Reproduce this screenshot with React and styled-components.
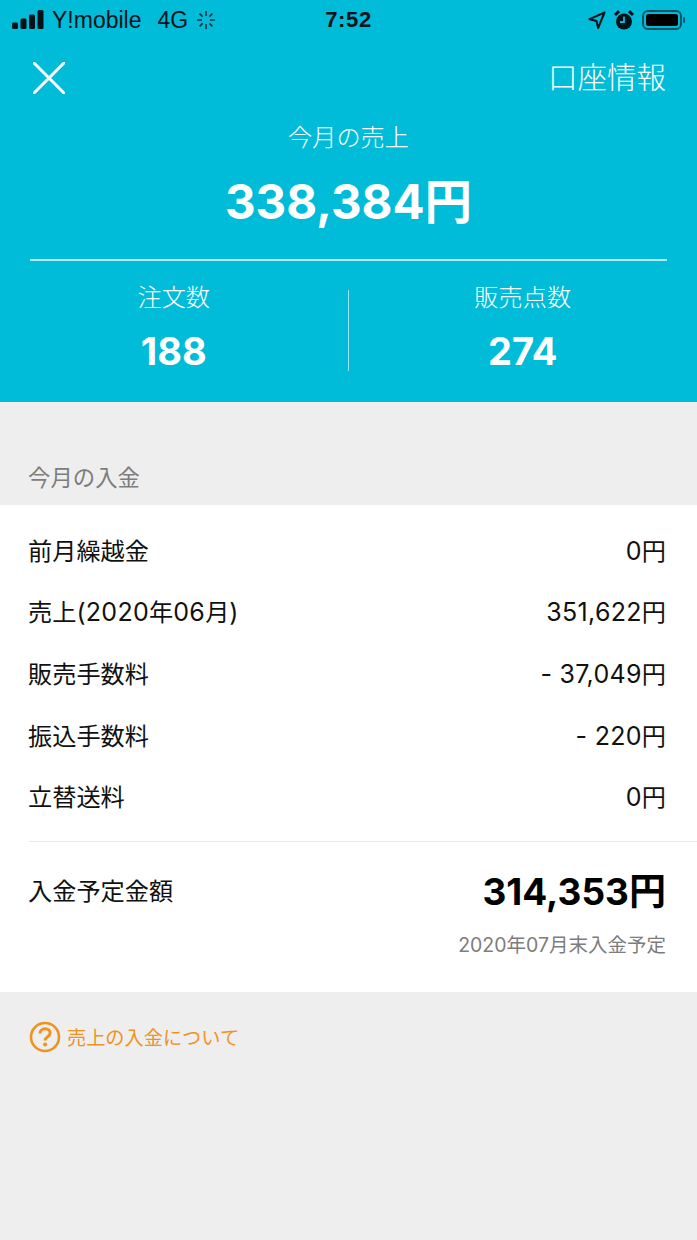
import React from "react";
import styled, { createGlobalStyle } from "styled-components";

const Global = createGlobalStyle`
  html, body { margin: 0; padding: 0; background: #eeeeee; }
  body { font-family: "Inter", "Noto Sans CJK JP", sans-serif; }
`;
const Page = styled.div`
  width: 697px; height: 1240px; overflow: hidden; background: #eeeeee; display: flex; flex-direction: column;
`;
const Hero = styled.header`
  background: #00bcd8; height: 402px; display: flex; flex-direction: column; color: #fff; flex: none;
`;
const StatusBar = styled.div`
  height: 40px; padding: 0 12px; display: grid; grid-template-columns: 1fr auto 1fr; align-items: center; color: #06121a; flex: none;
`;
const StatusLeft = styled.div`display: flex; align-items: center; font: 23px "Liberation Sans", sans-serif;`;
const StatusRight = styled.div`display: flex; align-items: center; justify-content: flex-end; gap: 8px;`;
const Carrier = styled.span`margin-left: 8px;`;
const Network = styled.span`margin-left: 16px;`;
const Clock = styled.span`font: 700 22px "Liberation Sans", sans-serif; letter-spacing: 0.6px;`;
const Spin = styled.svg`margin-left: 8px;`;
const TopBar = styled.div`
  height: 76px; padding: 0 31px 0 33px; display: flex; justify-content: space-between; align-items: center;
  box-sizing: border-box; flex: none;
`;
const AccountLink = styled.span`font: 300 29.5px/40px "Noto Sans CJK JP", sans-serif; padding-bottom: 6px;`;
const HeroLabel = styled.div`
  text-align: center; font: 300 24.2px/30px "Noto Sans CJK JP", sans-serif; margin-top: 5px;
`;
const HeroAmount = styled.div`
  text-align: center; font: 700 47.5px/60px "Inter", "Noto Sans CJK JP", sans-serif; margin-top: 21px; height: 60px;
`;
const Divider = styled.div`height: 2px; background: rgba(255,255,255,.7); margin: 27px 30px 0; flex: none;`;
const Stats = styled.div`display: grid; grid-template-columns: 1fr 1fr; margin-top: 29px;`;
const Stat = styled.div`
  display: flex; flex-direction: column; align-items: center; height: 81px;
  &:first-child { border-right: 1px solid rgba(255,255,255,.6); }
`;
const StatLabel = styled.div`font: 300 24.2px/12px "Noto Sans CJK JP", sans-serif;`;
const StatValue = styled.div`font: 700 38px/44px "Inter", sans-serif; margin-top: 27px;`;
const SectionHead = styled.div`
  height: 103px; box-sizing: border-box; padding: 58px 28px 0; color: #7d7d7d;
  font: 400 22.4px/32px "Noto Sans CJK JP", sans-serif; flex: none;
`;
const Card = styled.section`background: #fff; padding-top: 13.6px; height: 487px; box-sizing: border-box; flex: none;`;
const Row = styled.div`
  height: 61.6px; padding: 0 31px 0 28px; display: flex; justify-content: space-between; align-items: center;
  font: 400 24.2px "Inter", "Noto Sans CJK JP", sans-serif; color: #111;
`;
const Num = styled.span`font-size: 25px; letter-spacing: 0.3px;`;
const Rule = styled.div`height: 1px; background: #e9e9e9; margin: 14.4px 0 0 29px;`;
const TotalRow = styled.div`
  display: flex; justify-content: space-between; align-items: center; padding: 19px 31px 0 28px; height: 56px; color: #111;
`;
const TotalLabel = styled.span`font: 400 24.2px "Noto Sans CJK JP", sans-serif; padding-top: 2px;`;
const TotalValue = styled.span`font: 700 37px "Inter", "Noto Sans CJK JP", sans-serif; color: #000;`;
const Note = styled.div`
  text-align: right; padding: 14px 31px 0 0; color: #7d7d7d; font: 400 19.5px/28px "Inter", "Noto Sans CJK JP", sans-serif;
`;
const Help = styled.div`
  display: flex; align-items: center; padding: 29px 29px 0; gap: 6px; color: #f09222;
  font: 400 19.2px/32px "Noto Sans CJK JP", sans-serif;
`;

const rows = [
  ["前月繰越金", <><Num>0</Num>円</>],
  [<>売上<Num>(2020</Num>年<Num>06</Num>月<Num>)</Num></>, <><Num>351,622</Num>円</>],
  ["販売手数料", <><Num>- 37,049</Num>円</>],
  ["振込手数料", <><Num>- 220</Num>円</>],
  ["立替送料", <><Num>0</Num>円</>],
];

export default function App() {
  return (
    <Page>
      <Global />
      <Hero>
        <StatusBar>
          <StatusLeft>
            <svg width="32" height="20" viewBox="0 0 32 20" fill="#06121a">
              <rect x="0" y="12.5" width="6" height="6.5" rx="1.5" />
              <rect x="8.5" y="8.5" width="6" height="10.5" rx="1.5" />
              <rect x="17" y="4.5" width="6" height="14.5" rx="1.5" />
              <rect x="25.5" y="0" width="6" height="19" rx="1.5" />
            </svg>
            <Carrier>Y!mobile</Carrier>
            <Network>4G</Network>
            <Spin width="20" height="20" viewBox="0 0 20 20" stroke="#06323f" strokeWidth="1.6">
              <path d="M10 1v5M10 14v5M1 10h5M14 10h5M3.6 3.6l3 3M13.4 13.4l3 3M3.6 16.4l3-3M13.4 6.6l3-3" />
            </Spin>
          </StatusLeft>
          <Clock>7:52</Clock>
          <StatusRight>
            <svg width="18" height="18" viewBox="0 0 18 18" fill="none" stroke="#06121a" strokeWidth="2" strokeLinejoin="round">
              <path d="M16.5 1.5 1.5 8.2l7 1.8 1.6 7z" />
            </svg>
            <svg width="20" height="21" viewBox="0 0 20 21">
              <circle cx="10" cy="11.5" r="8" fill="#06121a" />
              <path d="M10 6.5v5.5H6" stroke="#00bcd8" strokeWidth="1.8" fill="none" />
              <path d="M1 5 5 1.2M19 5l-4-3.8" stroke="#06121a" strokeWidth="3" />
            </svg>
            <svg width="43" height="20" viewBox="0 0 43 20">
              <rect x="1" y="1" width="38" height="18" rx="5" fill="none" stroke="#0b5566" strokeWidth="2" />
              <rect x="4" y="4" width="32" height="12" rx="2.5" fill="#000" />
              <rect x="41" y="7" width="2" height="6" rx="1" fill="#0b5566" />
            </svg>
          </StatusRight>
        </StatusBar>
        <TopBar>
          <svg width="32" height="32" viewBox="0 0 32 32" stroke="#fff" strokeWidth="3" strokeLinecap="round">
            <path d="M1 1l30 30M31 1 1 31" />
          </svg>
          <AccountLink>口座情報</AccountLink>
        </TopBar>
        <HeroLabel>今月の売上</HeroLabel>
        <HeroAmount>338,384円</HeroAmount>
        <Divider />
        <Stats>
          <Stat>
            <StatLabel>注文数</StatLabel>
            <StatValue>188</StatValue>
          </Stat>
          <Stat>
            <StatLabel>販売点数</StatLabel>
            <StatValue>274</StatValue>
          </Stat>
        </Stats>
      </Hero>
      <SectionHead>今月の入金</SectionHead>
      <Card>
        {rows.map(([label, value], i) => (
          <Row key={i}>
            <span>{label}</span>
            <span>{value}</span>
          </Row>
        ))}
        <Rule />
        <TotalRow>
          <TotalLabel>入金予定金額</TotalLabel>
          <TotalValue>314,353円</TotalValue>
        </TotalRow>
        <Note>2020年07月末入金予定</Note>
      </Card>
      <Help>
        <svg width="32" height="32" viewBox="0 0 32 32" fill="none">
          <circle cx="16" cy="16" r="14" stroke="#f09222" strokeWidth="2.6" />
          <path d="M11 12.5c0-3 2.3-4.7 5.100-4.700 2.900 0 5 1.700 5 4.200 0 3.900-5 3.600-5 7.500" stroke="#f09222" strokeWidth="3" />
          <circle cx="16.1" cy="23.5" r="2" fill="#f09222" />
        </svg>
        売上の入金について
      </Help>
    </Page>
  );
}
